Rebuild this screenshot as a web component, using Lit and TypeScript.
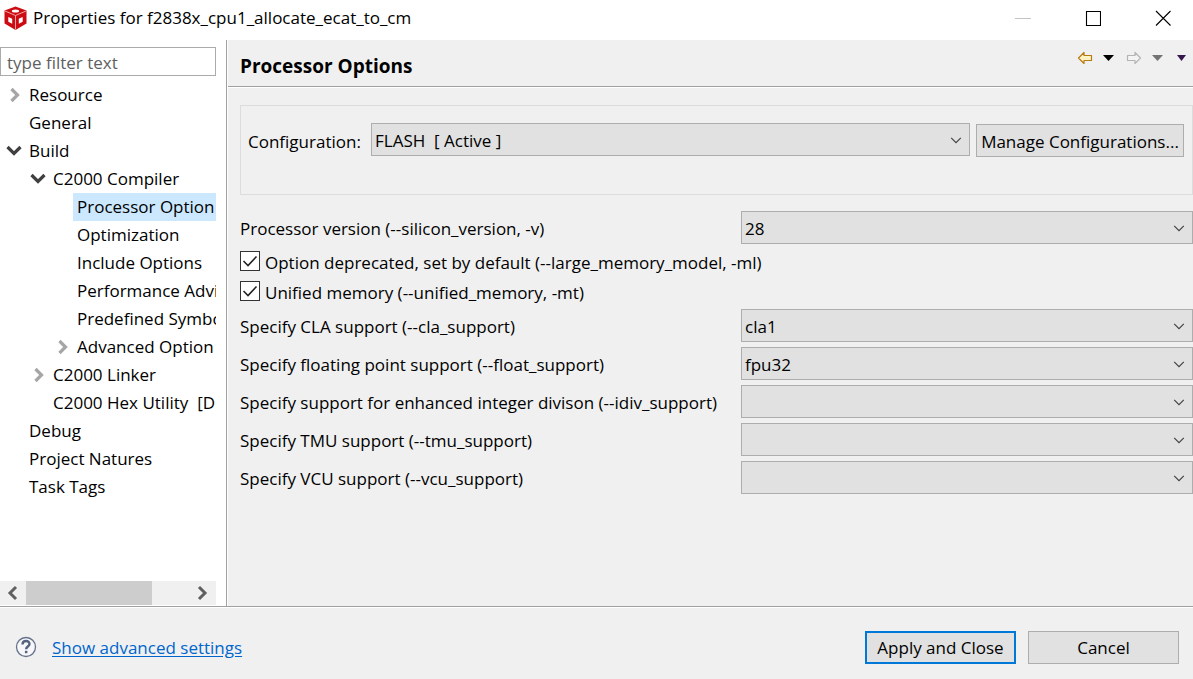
import { LitElement, html, css, svg, nothing } from "lit";
import { customElement, state } from "lit/decorators.js";
import { classMap } from "lit/directives/class-map.js";

interface TreeNode {
  label: string;
  level: number;
  expander?: "open" | "closed";
}

interface ComboRow {
  kind: "combo";
  id: string;
  label: string;
  value: string;
}

interface CheckRow {
  kind: "check";
  id: string;
  label: string;
}

const TREE: TreeNode[] = [
  { label: "Resource", level: 0, expander: "closed" },
  { label: "General", level: 0 },
  { label: "Build", level: 0, expander: "open" },
  { label: "C2000 Compiler", level: 1, expander: "open" },
  { label: "Processor Option", level: 2 },
  { label: "Optimization", level: 2 },
  { label: "Include Options", level: 2 },
  { label: "Performance Advi", level: 2 },
  { label: "Predefined Symbo", level: 2 },
  { label: "Advanced Option", level: 2, expander: "closed" },
  { label: "C2000 Linker", level: 1, expander: "closed" },
  { label: "C2000 Hex Utility\u00a0 [D", level: 1 },
  { label: "Debug", level: 0 },
  { label: "Project Natures", level: 0 },
  { label: "Task Tags", level: 0 },
];

const OPTIONS: (ComboRow | CheckRow)[] = [
  { kind: "combo", id: "silicon", label: "Processor version (--silicon_version, -v)", value: "28" },
  { kind: "check", id: "large", label: "Option deprecated, set by default (--large_memory_model, -ml)" },
  { kind: "check", id: "unified", label: "Unified memory (--unified_memory, -mt)" },
  { kind: "combo", id: "cla", label: "Specify CLA support (--cla_support)", value: "cla1" },
  { kind: "combo", id: "float", label: "Specify floating point support (--float_support)", value: "fpu32" },
  { kind: "combo", id: "idiv", label: "Specify support for enhanced integer divison (--idiv_support)", value: "" },
  { kind: "combo", id: "tmu", label: "Specify TMU support (--tmu_support)", value: "" },
  { kind: "combo", id: "vcu", label: "Specify VCU support (--vcu_support)", value: "" },
];

const stroke = (d: string, w: number, size = 16) => svg`
  <svg width=${size} height=${size} viewBox="0 0 16 16" fill="none" stroke="currentColor" stroke-width=${w} aria-hidden="true">
    <path d=${d} />
  </svg>`;

const caret = (w: number, color: string) => html`
  <svg width=${w} height="6" viewBox="0 0 12 6" preserveAspectRatio="none" aria-hidden="true">
    <path d="M0 0h12L6 6z" fill=${color} />
  </svg>`;

@customElement("app-root")
export class AppRoot extends LitElement {
  @state() private selected = "Processor Option";

  static styles = css`
    :host {
      display: flex;
      flex-direction: column;
      height: 100vh;
      box-sizing: border-box;
      overflow: hidden;
      background: #f0f0f0;
      color: #000;
      font-family: "Open Sans", "Noto Sans", sans-serif;
      font-size: 17px;
      line-height: 24px;
    }
    * {
      box-sizing: border-box;
    }
    svg {
      display: block;
      flex: none;
    }
    button,
    input,
    select {
      font: inherit;
      color: inherit;
      margin: 0;
      border-radius: 0;
    }
    button {
      padding: 0;
    }
    .titlebar {
      display: flex;
      align-items: center;
      gap: 5px;
      flex: none;
      height: 40px;
      padding: 0 0 4px 3px;
      background: #fff;
    }
    .title {
      flex: 1;
      margin: 0;
      font-size: 17px;
      font-weight: 400;
      white-space: nowrap;
    }
    .winbuttons {
      display: flex;
    }
    .winbtn {
      display: grid;
      place-items: center;
      width: 70px;
      height: 36px;
      border: 0;
      background: none;
    }
    .winbtn:last-child {
      width: 60px;
      margin-left: 5px;
    }
    .disabled {
      color: #c4c4c4;
    }
    .body {
      display: flex;
      flex: 1;
      min-height: 0;
    }
    .side {
      display: flex;
      flex-direction: column;
      flex: none;
      width: 227px;
      padding: 7px 10px 1px 0;
      border-right: 1px solid #a0a0a0;
      background: #fff;
    }
    .filter {
      width: 100%;
      height: 29px;
      padding: 2px 6px 0;
      border: 1px solid #ababab;
      background: #fff;
    }
    .filter::placeholder {
      color: #5f5f5f;
      opacity: 1;
    }
    .tree {
      flex: 1;
      min-height: 0;
      margin: 5px 0 0;
      padding: 0;
      overflow: hidden;
      list-style: none;
    }
    .node {
      display: flex;
      align-items: center;
      height: 28px;
      padding-left: 6px;
      white-space: nowrap;
    }
    .level1 {
      padding-left: 30px;
    }
    .level2 {
      padding-left: 54px;
    }
    .expander {
      flex: none;
      width: 19px;
      color: #a6a6a6;
    }
    .expander.open {
      color: #404040;
    }
    .node-label {
      flex: 1 0 auto;
      height: 28px;
      padding-left: 4px;
      line-height: 28px;
    }
    .node-label.selected {
      background: #cce8ff;
    }
    .scrollbar {
      display: flex;
      flex: none;
      height: 24px;
      background: #f0f0f0;
      color: #606060;
    }
    .arrow {
      display: grid;
      place-items: center;
      width: 26px;
      border: 0;
      background: none;
    }
    .track {
      flex: 1;
    }
    .thumb {
      width: 77%;
      height: 100%;
      background: #cdcdcd;
    }
    .page {
      flex: 1;
      min-width: 0;
      border-left: 1px solid #fff;
    }
    .pagehead {
      display: flex;
      justify-content: space-between;
      height: 47px;
      padding: 0 7px 0 12px;
      border-bottom: 1px solid #a0a0a0;
      box-shadow: 0 1px #fff;
    }
    .heading {
      margin: 0;
      padding-top: 2px;
      font-size: 19px;
      font-weight: 700;
      line-height: 48px;
    }
    .nav {
      display: flex;
      align-items: center;
      gap: 14px;
      height: 36px;
    }
    .history {
      display: flex;
      align-items: center;
      gap: 10px;
    }
    .history:first-child {
      margin-right: -2px;
    }
    .tool {
      display: block;
      border: 0;
      background: none;
    }
    .group {
      display: flex;
      align-items: flex-start;
      height: 90px;
      margin: 18px 0 0 12px;
      padding: 17px 8px 0 7px;
      border: 1px solid #dcdcdc;
    }
    .group-label {
      width: 123px;
      line-height: 37px;
    }
    .group .combo {
      flex: 1;
    }
    .button {
      height: 33px;
      padding-top: 2px;
      border: 1px solid #adadad;
      background: #e1e1e1;
      white-space: nowrap;
    }
    .manage {
      width: 208px;
      margin: 1px 0 0 6px;
    }
    .options {
      display: grid;
      grid-template-columns: 496px 1fr;
      gap: 5px;
      padding: 16px 0 0 12px;
    }
    .row-label {
      line-height: 35px;
      height: 33px;
      white-space: nowrap;
    }
    .check {
      display: flex;
      align-items: flex-start;
      grid-column: 1 / -1;
      gap: 5px;
      height: 25px;
      padding-top: 2px;
    }
    .box {
      display: grid;
      grid-template-columns: 20px;
      grid-template-rows: 20px;
    }
    .tick {
      grid-area: 1 / 1;
      appearance: none;
      border: 1px solid #333;
      background: #fff;
    }
    .tick + svg {
      grid-area: 1 / 1;
      visibility: hidden;
      pointer-events: none;
    }
    .tick:checked + svg {
      visibility: visible;
    }
    .combo {
      display: grid;
      align-items: center;
      min-width: 0;
    }
    .select {
      grid-area: 1 / 1;
      width: 100%;
      height: 33px;
      padding: 2px 28px 0 3px;
      border: 1px solid #adadad;
      background: #e1e1e1;
      appearance: none;
    }
    .combo svg {
      grid-area: 1 / 1;
      justify-self: end;
      margin-right: 7px;
      color: #404040;
      pointer-events: none;
    }
    .footer {
      display: flex;
      align-items: center;
      flex: none;
      height: 73px;
      padding: 8px 14px 0 15px;
      border-top: 1px solid #a0a0a0;
      box-shadow: inset 0 1px #fff;
    }
    .help {
      border: 0;
      background: none;
    }
    .advanced {
      flex: 1;
      margin-left: 15px;
      padding-top: 2px;
    }
    .link {
      color: #0066cc;
      text-underline-offset: 2px;
    }
    .action {
      width: 151px;
      margin-left: 12px;
    }
    .primary {
      border: 2px solid #0078d7;
    }
  `;

  private combo(id: string, value: string) {
    return html`<div class="combo">
      <select class="select" id=${id}>
        <option>${value}</option>
      </select>
      ${stroke("M2.5 5.5L8 11l5.5-5.5", 1.3, 14)}
    </div>`;
  }

  private node(n: TreeNode) {
    const icon =
      n.expander === "open"
        ? stroke("M1.5 4L8 10.5 14.500 4", 3.2)
        : n.expander === "closed"
          ? stroke("M5.5 2L11.5 8l-6 6", 3.2)
          : nothing;
    return html`<li class="node level${n.level}" role="treeitem" aria-selected=${n.label === this.selected}
      @click=${() => (this.selected = n.label)}>
      <span class=${classMap({ expander: true, open: n.expander === "open" })}>${icon}</span>
      <span class=${classMap({ "node-label": true, selected: n.label === this.selected })}>${n.label}</span>
    </li>`;
  }

  private option(o: ComboRow | CheckRow) {
    if (o.kind === "combo") {
      return html`<label class="row-label" for=${o.id}>${o.label}</label>${this.combo(o.id, o.value)}`;
    }
    return html`<div class="check">
      <span class="box">
        <input class="tick" type="checkbox" id=${o.id} checked />
        <svg width="20" height="20" viewBox="0 0 20 20" fill="none" stroke="#222" stroke-width="1.6" aria-hidden="true">
          <path d="M3.5 10L8 14.5 16.5 5.5" />
        </svg>
      </span>
      <label for=${o.id}>${o.label}</label>
    </div>`;
  }

  private arrowIcon(flip: boolean) {
    return html`<svg width="16" height="14" viewBox="0 0 16 14" aria-hidden="true">
      <path
        d=${flip ? "M14.5 7L9 1.5V4.5H1.5V9.5H9V12.5z" : "M1.5 7L7 1.5V4.5H14.5V9.5H7V12.5z"}
        fill=${flip ? "#f4f4f4" : "#fff3c4"}
        stroke=${flip ? "#b4b4b4" : "#b97a14"}
        stroke-width="1.2"
        stroke-linejoin="round"
      />
    </svg>`;
  }

  render() {
    return html`
      <header class="titlebar">
        <svg width="25" height="26" viewBox="0 0 25 26" aria-hidden="true">
          <path d="M12.5 1.500L23.500 5.500V18.500L12.500 25 1.500 18.500V5.500z" fill="#cc0c12" />
          <path d="M2 6L12.500 10.500 23 6M12.500 10.500V24.500" fill="none" stroke="#f5b5b6" stroke-width=".9" />
          <ellipse cx="12.500" cy="5.900" rx="3.600" ry="1.500" fill="#fff" />
          <path d="M5.300 12L9.200 13.800V18.800L5.300 16.800z" fill="#fff" />
          <path d="M19.700 12L15.800 13.800V18.800L19.700 16.800z" fill="#fff" />
        </svg>
        <h1 class="title">Properties for f2838x_cpu1_allocate_ecat_to_cm</h1>
        <div class="winbuttons">
          <button class="winbtn disabled" aria-label="Minimize" disabled>${stroke("M0 8.5h16", 1)}</button>
          <button class="winbtn" aria-label="Maximize">${stroke("M1.5 1.500h14v14h-14z", 1.1)}</button>
          <button class="winbtn" aria-label="Close">${stroke("M1 1l14.500 14.500M15.500 1L1 15.500", 1.1)}</button>
        </div>
      </header>
      <div class="body">
        <nav class="side">
          <input class="filter" type="text" placeholder="type filter text" aria-label="Filter" />
          <ul class="tree" role="tree">
            ${TREE.map((n) => this.node(n))}
          </ul>
          <div class="scrollbar">
            <button class="arrow" aria-label="Scroll left">${stroke("M11 2L5 8l6 6", 3)}</button>
            <div class="track"><div class="thumb"></div></div>
            <button class="arrow" aria-label="Scroll right">${stroke("M4 2l6 6-6 6", 3)}</button>
          </div>
        </nav>
        <main class="page">
          <div class="pagehead">
            <h2 class="heading">Processor Options</h2>
            <div class="nav">
              <div class="history">
                <button class="tool" aria-label="Back">${this.arrowIcon(false)}</button>
                <button class="tool" aria-label="Back history">${caret(11, "#000")}</button>
              </div>
              <div class="history">
                <button class="tool" aria-label="Forward">${this.arrowIcon(true)}</button>
                <button class="tool" aria-label="Forward history">${caret(11, "#737373")}</button>
              </div>
              <button class="tool" aria-label="Menu">${caret(9, "#35164f")}</button>
            </div>
          </div>
          <section class="group">
            <label class="group-label" for="config">Configuration:</label>
            ${this.combo("config", "FLASH\u00a0 [ Active ]")}
            <button class="button manage">Manage Configurations...</button>
          </section>
          <section class="options">${OPTIONS.map((o) => this.option(o))}</section>
        </main>
      </div>
      <footer class="footer">
        <button class="help" aria-label="Help">
          <svg width="22" height="22" viewBox="0 0 22 22" fill="none" aria-hidden="true">
            <circle cx="11" cy="11" r="9.500" fill="#f7f7f9" stroke="#65718c" stroke-width="1.300" />
            <path d="M7.500 8.500C7.500 4 14.500 4 14.500 8c0 2.500-3.400 2.600-3.400 5.200" stroke="#56637f" stroke-width="2.400" />
            <path d="M9.900 14.800h2.500v2.400H9.900z" fill="#56637f" />
          </svg>
        </button>
        <span class="advanced"><a class="link" href="#advanced">Show advanced settings</a></span>
        <button class="button action primary">Apply and Close</button>
        <button class="button action">Cancel</button>
      </footer>
    `;
  }
}
